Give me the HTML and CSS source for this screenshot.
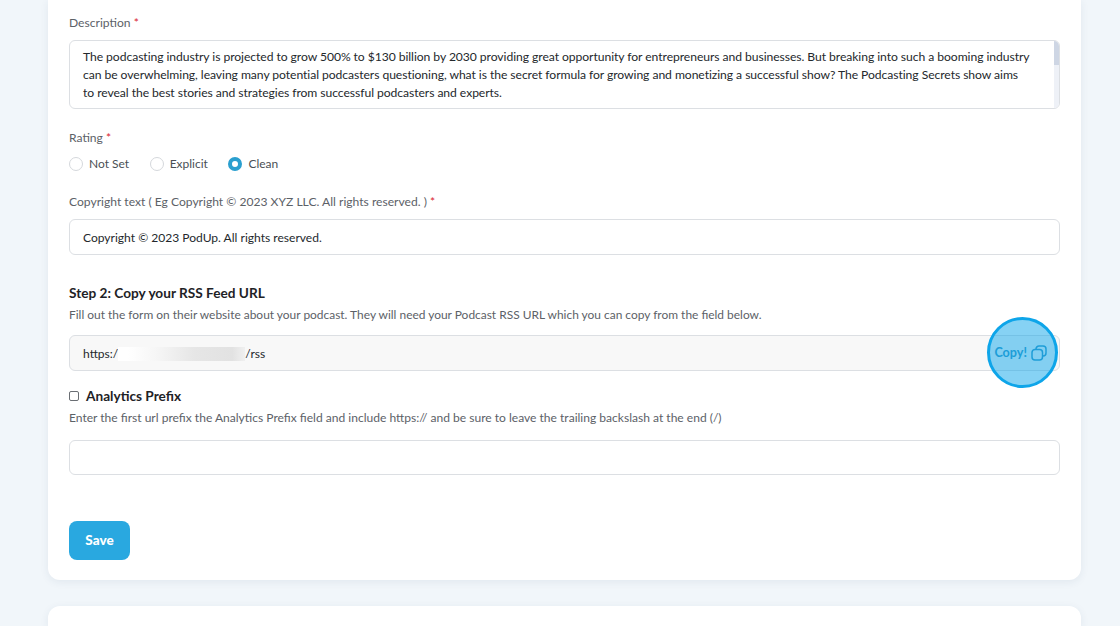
FILE: index.html
```html
<!DOCTYPE html>
<html lang="en">
<head>
<meta charset="utf-8">
<title>Podcast settings</title>
<link rel="stylesheet" href="styles.css">
</head>
<body>
<main class="card">
  <div class="field field-desc">
    <label class="label">Description <span class="req">*</span></label>
    <div class="textarea">
      <p>The podcasting industry is projected to grow 500% to $130 billion by 2030 providing great opportunity for entrepreneurs and businesses. But breaking into such a booming industry can be overwhelming, leaving many potential podcasters questioning, what is the secret formula for growing and monetizing a successful show? The Podcasting Secrets show aims to reveal the best stories and strategies from successful podcasters and experts.</p>
      <span class="scrollbar"></span>
    </div>
  </div>
  <div class="field field-rating">
    <label class="label">Rating <span class="req">*</span></label>
    <div class="radios">
      <span class="radio-item"><span class="radio"></span>Not Set</span>
      <span class="radio-item"><span class="radio"></span>Explicit</span>
      <span class="radio-item"><span class="radio radio-on"></span>Clean</span>
    </div>
  </div>
  <div class="field field-copy">
    <label class="label">Copyright text ( Eg Copyright © 2023 XYZ LLC. All rights reserved. ) <span class="req">*</span></label>
    <div class="input">Copyright © 2023 PodUp. All rights reserved.</div>
  </div>
  <section class="step">
    <h2 class="title">Step 2: Copy your RSS Feed URL</h2>
    <p class="help">Fill out the form on their website about your podcast. They will need your Podcast RSS URL which you can copy from the field below.</p>
    <div class="input input-url">
      <span class="url">https:/<span class="redact"></span>/rss</span>
      <span class="copy">Copy!
        <svg class="copy-icon" viewBox="0 0 16 16" fill="none" stroke="currentColor" stroke-width="1.5"><rect x="1" y="4.5" width="10.5" height="10.5" rx="3"/><path d="M5 4.4V4a3 3 0 0 1 3-3h4a3 3 0 0 1 3 3v4a3 3 0 0 1-3 3h-.4"/></svg>
      </span>
    </div>
  </section>
  <section class="analytics">
    <div class="check-row"><span class="checkbox"></span><h2 class="title">Analytics Prefix</h2></div>
    <p class="help help-wide">Enter the first url prefix the Analytics Prefix field and include https:// and be sure to leave the trailing backslash at the end (/)</p>
    <div class="input"></div>
  </section>
  <button class="save" type="button">Save</button>
</main>
<div class="card card-next"></div>
<span class="highlight"></span>
</body>
</html>
```

FILE: styles.css
```css
* { box-sizing: border-box; }
html, body { height: 100%; }
body {
  margin: 0;
  height: 626px;
  overflow: hidden;
  position: relative;
  background: #f1f6fa;
  font-family: "Lato", "Noto Sans", sans-serif;
  font-size: 12px;
  color: #212529;
}
.card {
  width: 1033px;
  height: 580px;
  margin-left: 48px;
  padding: 15px 21px 0;
  background: #fff;
  border-radius: 0 0 12px 12px;
  box-shadow: 0 2px 8px rgba(40, 70, 100, .08);
}
.card-next {
  height: 20px;
  margin-top: 26px;
  border-radius: 12px 12px 0 0;
  padding: 0;
}
.field-rating { margin-top: 21px; }
.label {
  display: block;
  font-size: 12.1px;
  line-height: 16px;
  color: #5c6167;
}
.req { color: #d9232e; }
.textarea {
  position: relative;
  height: 69px;
  margin-top: 9px;
  padding: 7px 29px 7px 13px;
  border: 1px solid #dcdfe3;
  border-radius: 6px;
}
.textarea p {
  margin: 0;
  font-size: 12.15px;
  line-height: 18.2px;
  letter-spacing: -.06px;
  color: #24282c;
}
.scrollbar {
  position: absolute;
  top: 0;
  right: 0;
  width: 5px;
  height: 100%;
  background: linear-gradient(#ced6e4 0 36%, #eef1f7 36%);
  border-radius: 0 6px 6px 0;
}
.radios {
  display: flex;
  gap: 20.5px;
  margin-top: 10px;
  line-height: 16px;
  color: #4a4f55;
}
.radio-item { display: flex; align-items: center; gap: 6px; font-size: 12px; }
.radio {
  width: 14px;
  height: 14px;
  border: 1px solid #d5d8dc;
  border-radius: 50%;
}
.radio-on { border: 4px solid #2a9fcf; background: #fff; }
.field-copy { margin-top: 22px; }
.input {
  height: 36px;
  margin-top: 9px;
  padding: 1px 13px 0;
  display: flex;
  align-items: center;
  border: 1px solid #dcdfe3;
  border-radius: 6px;
  font-size: 12.05px;
  color: #24282c;
}
.step { margin-top: 29px; }
.title {
  margin: 0;
  font-size: 13.65px;
  line-height: 18px;
  font-weight: 700;
  color: #1e2226;
}
.help {
  margin: 5px 0 0;
  font-size: 11.95px;
  line-height: 15px;
  color: #5c6167;
}
.help-wide { font-size: 12.05px; }
.input-url {
  justify-content: space-between;
  margin-top: 13px;
  background: #f8f8f8;
  padding-right: 12px;
}
.url { display: flex; align-items: center; }
.redact {
  width: 127px;
  height: 14px;
  background: linear-gradient(90deg, #fff 0 8%, #f6f6f6 30%, #e6e6e6 60%, #e2e2e2 90%, #f0f0f0);
}
.copy { display: flex; align-items: center; gap: 4px; margin-top: -2px; color: #2e95c6; font-weight: 700; font-size: 12.6px; }
.copy-icon { width: 16px; height: 16px; }
.analytics { margin-top: 16px; }
.check-row { display: flex; align-items: center; gap: 7px; }
.checkbox {
  width: 10px;
  height: 10px;
  border: 1px solid #6a6e73;
  border-radius: 2px;
}
.analytics .help { margin-top: 5px; }
.analytics .input { height: 35px; margin-top: 15px; }
.save {
  display: block;
  width: 61px;
  height: 39px;
  margin-top: 46px;
  padding: 0 0 2px;
  border: 0;
  border-radius: 8px;
  background: #29a8e0;
  color: #fff;
  font: 900 13.5px "Lato", sans-serif;
}
.highlight {
  position: absolute;
  left: 987px;
  top: 317px;
  width: 71px;
  height: 71px;
  border: 3px solid #0ea5e9;
  border-radius: 50%;
  background: rgba(14, 165, 233, .5);
}
```
